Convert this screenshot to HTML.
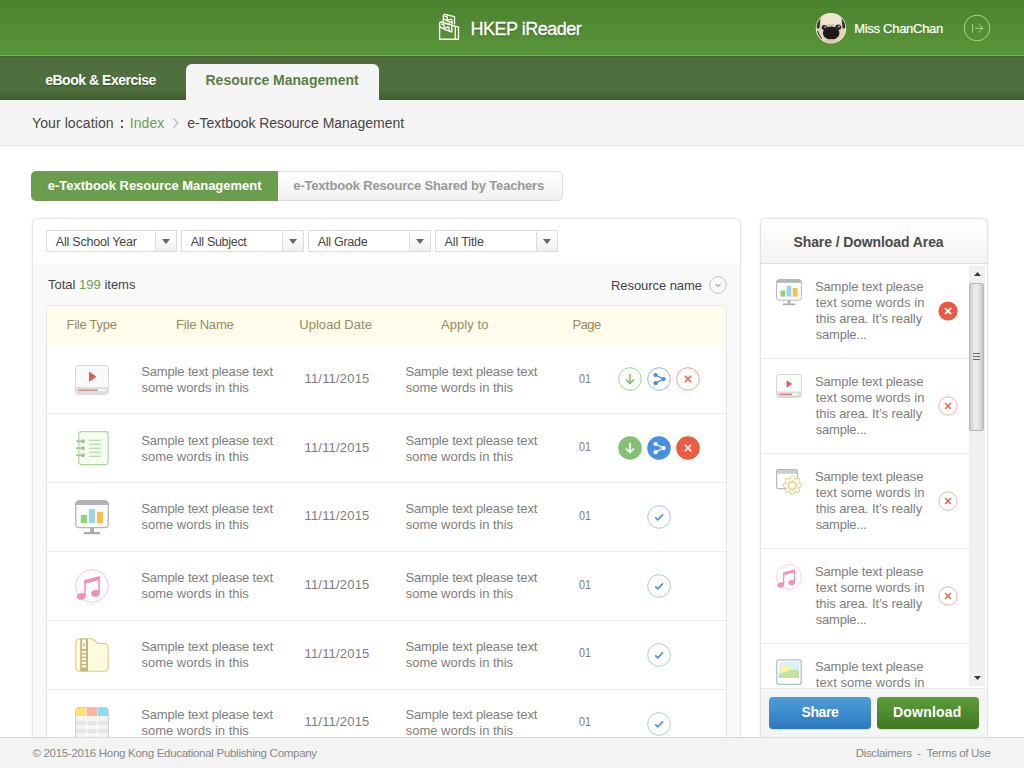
<!DOCTYPE html>
<html><head><meta charset="utf-8"><style>
*{margin:0;padding:0;box-sizing:border-box}
html,body{width:1024px;height:768px;overflow:hidden;background:#fff;font-family:"Liberation Sans",sans-serif;color:#444}
.a{position:absolute}
.t{position:absolute;white-space:nowrap;line-height:1}
svg{position:absolute;overflow:visible}
</style></head><body>
<div class="a" style="left:0;top:0;width:1024px;height:55px;background:linear-gradient(#4b822e,#5a9538)"></div>
<div class="a" style="left:0;top:55px;width:1024px;height:1px;background:#7aae5f"></div>
<div class="a" style="left:0;top:56px;width:1024px;height:44px;background:linear-gradient(#3e6230 0px,#4f6f3e 2px,#4f6f3e 34px,#3d5d2e 44px)"></div>
<div class="a" style="left:186px;top:64px;width:193px;height:36px;background:#f5f5f5;border-radius:6px 6px 0 0"></div>
<div class="a" style="left:0;top:100px;width:1024px;height:46px;background:#f5f5f5;border-bottom:1px solid #e2e2e2"></div>
<svg style="left:436px;top:11px" width="26" height="32" viewBox="0 0 26 32" fill="none" stroke="#fff" stroke-width="1.35" stroke-linejoin="round">
<path d="M3.6 12.2 Q3.6 10.8 5.2 11 L22.5 16.2 V28.2 H3.6 Z"/>
<path d="M3.8 15.6 Q9 19.2 15.8 21"/>
<path d="M5.2 13 L8 13.6 L8.4 17 L12.6 16 L13.4 19.3"/>
<path d="M10 12.3 L14 13.3"/>
<path d="M15.8 13.8 V21.2 M19.3 15.2 V28.2"/>
<path d="M7.3 11 V4.8 Q7.3 3.3 9 3.5 L18.5 5.7 V13.2"/>
<path d="M7.5 7.8 Q12.5 10.5 16.8 12.4"/>
<path d="M8.6 5.3 L11.2 6 L11.6 9.2 L15.5 8.2 L16.3 11.3"/>
</svg>
<div class="t" id="t1cf31660" style="left:470.52px;top:19.96px;font-size:18px;color:#fff;letter-spacing:-0.496px;text-shadow:0 1px 2px rgba(0,0,0,.4);-webkit-text-stroke:0.35px #fff;">HKEP iReader</div>

<svg style="left:815px;top:12px" width="32" height="32" viewBox="0 0 32 32">
<defs><clipPath id="av"><circle cx="16" cy="16.2" r="14.5"/></clipPath></defs>
<circle cx="16" cy="16.2" r="15.2" fill="#f2f5ee"/>
<g clip-path="url(#av)">
<rect x="0" y="0" width="32" height="32" fill="#e2d4b8"/>
<ellipse cx="16" cy="7.5" rx="11" ry="6.5" fill="#efe6d2"/>
<path d="M1 6 C2.5 4 4.5 4 5.5 5.5 L4.5 16 C3 17 2 16.5 1 15Z" fill="#3e332c"/>
<path d="M31 6 C29.5 4 27.5 4 26.5 5.5 L27.5 16 C29 17 30 16.5 31 15Z" fill="#3e332c"/>
<path d="M2.6 19 C3.5 22.5 4.8 25 6.5 27" stroke="#4a3c33" stroke-width="1.2" fill="none"/>
<ellipse cx="16.2" cy="21.2" rx="8.2" ry="6.6" fill="#1d1919"/>
<ellipse cx="9.6" cy="15.6" rx="2.9" ry="2.7" fill="#27232b"/><ellipse cx="23.2" cy="15.2" rx="2.9" ry="2.7" fill="#27232b"/>
<circle cx="10.3" cy="14.9" r="0.9" fill="#aeb2c4"/><circle cx="23.9" cy="14.5" r="0.9" fill="#aeb2c4"/>
<path d="M13 12.5 C14.5 13.5 17.5 13.5 19 12.5" stroke="#b09c7c" stroke-width="1" fill="none"/>
<ellipse cx="16" cy="29.5" rx="7.5" ry="2.2" fill="#dac9ad"/>
</g>
</svg>
<div class="t" id="ta21ea90d" style="left:854.22px;top:22.24px;font-size:13px;color:#fff;letter-spacing:-0.287px;-webkit-text-stroke:0.2px #fff;">Miss ChanChan</div>

<svg style="left:963px;top:14px" width="28" height="28" viewBox="0 0 28 28" fill="none" stroke="#a6d68e" stroke-width="1">
<circle cx="14" cy="14" r="12.8"/>
<path d="M9.6 10 V18.6 M12 14.3 H19.8 M15.8 10.2 L19.9 14.3 L15.8 18.4"/>
</svg>
<div class="t" id="t81c8b249" style="left:45.16px;top:73.15px;font-size:14px;color:#fff;font-weight:bold;letter-spacing:-0.470px;text-shadow:0 1px 1px rgba(0,0,0,.3);">eBook &amp; Exercise</div>

<div class="t" id="tf75ed92f" style="left:205.50px;top:73.45px;font-size:14px;color:#5b7f45;font-weight:bold;letter-spacing:-0.008px;">Resource Management</div>

<div class="t" id="t1b3dce1d" style="left:32.00px;top:115.95px;font-size:14px;color:#454545;letter-spacing:0.093px;">Your location</div>

<div class="a" style="left:121px;top:120px;width:2px;height:2px;background:#555"></div><div class="a" style="left:121px;top:126px;width:2px;height:2px;background:#555"></div>
<div class="t" id="teaa0acd9" style="left:129.70px;top:115.95px;font-size:14px;color:#6a9f4e;letter-spacing:0.090px;">Index</div>

<svg style="left:172px;top:117px" width="8" height="12" viewBox="0 0 8 12" fill="none" stroke="#b5b5b5" stroke-width="1.1"><path d="M1.5 1.5 L6 6 L1.5 10.5"/></svg>
<div class="t" id="t9b6aee1f" style="left:187.26px;top:115.95px;font-size:14px;color:#454545;letter-spacing:-0.038px;">e-Textbook Resource Management</div>

<div class="a" style="left:31px;top:171px;width:248px;height:30px;background:#6a9e4d;border-radius:5px 0 0 5px"></div>
<div class="a" style="left:278px;top:171px;width:285px;height:30px;background:linear-gradient(#fff,#f1f1f1);border:1px solid #dcdcdc;border-left:none;border-radius:0 5px 5px 0"></div>
<div class="t" id="t158e61e4" style="left:47.78px;top:178.99px;font-size:13px;color:#fff;font-weight:bold;letter-spacing:-0.021px;">e-Textbook Resource Management</div>

<div class="t" id="teff9cd35" style="left:293.24px;top:178.99px;font-size:13px;color:#999;font-weight:bold;letter-spacing:-0.175px;">e-Textbook Resource Shared by Teachers</div>

<div class="a" style="left:32px;top:218px;width:709px;height:560px;background:#f9f9f9;border:1px solid #e6e6e6;border-radius:6px;box-shadow:0 0 3px rgba(0,0,0,.06)"></div>
<div class="a" style="left:33px;top:219px;width:707px;height:44px;background:#fff;border-radius:5px 5px 0 0"></div>
<div class="a" style="left:46px;top:230px;width:131px;height:22px;background:#fff;border:1px solid #dcdcdc"></div>
<div class="a" style="left:155px;top:231px;width:21px;height:20px;background:linear-gradient(#fff,#f0f0f0);border-left:1px solid #dcdcdc"></div>
<svg style="left:162px;top:239px" width="8" height="5" viewBox="0 0 8 5"><path d="M0 0 H8 L4 5Z" fill="#666"/></svg>
<div class="t" id="tba548239" style="left:55.78px;top:235.52px;font-size:12.5px;color:#454545;letter-spacing:-0.207px;">All School Year</div>

<div class="a" style="left:181px;top:230px;width:123px;height:22px;background:#fff;border:1px solid #dcdcdc"></div>
<div class="a" style="left:282px;top:231px;width:21px;height:20px;background:linear-gradient(#fff,#f0f0f0);border-left:1px solid #dcdcdc"></div>
<svg style="left:289px;top:239px" width="8" height="5" viewBox="0 0 8 5"><path d="M0 0 H8 L4 5Z" fill="#666"/></svg>
<div class="t" id="t078d9cbb" style="left:190.78px;top:235.52px;font-size:12.5px;color:#454545;letter-spacing:-0.300px;">All Subject</div>

<div class="a" style="left:308px;top:230px;width:123px;height:22px;background:#fff;border:1px solid #dcdcdc"></div>
<div class="a" style="left:409px;top:231px;width:21px;height:20px;background:linear-gradient(#fff,#f0f0f0);border-left:1px solid #dcdcdc"></div>
<svg style="left:416px;top:239px" width="8" height="5" viewBox="0 0 8 5"><path d="M0 0 H8 L4 5Z" fill="#666"/></svg>
<div class="t" id="tf6671380" style="left:317.78px;top:235.52px;font-size:12.5px;color:#454545;letter-spacing:-0.275px;">All Grade</div>

<div class="a" style="left:435px;top:230px;width:123px;height:22px;background:#fff;border:1px solid #dcdcdc"></div>
<div class="a" style="left:536px;top:231px;width:21px;height:20px;background:linear-gradient(#fff,#f0f0f0);border-left:1px solid #dcdcdc"></div>
<svg style="left:543px;top:239px" width="8" height="5" viewBox="0 0 8 5"><path d="M0 0 H8 L4 5Z" fill="#666"/></svg>
<div class="t" id="t6e91f864" style="left:444.62px;top:235.52px;font-size:12.5px;color:#454545;letter-spacing:-0.125px;">All Title</div>

<div class="t" style="left:48px;top:278.4px;font-size:13px;color:#454545">Total <span style="color:#6a9f4e">199</span> items</div>
<div class="t" id="te484df56" style="left:611.00px;top:279.29px;font-size:13px;color:#454545;letter-spacing:-0.067px;">Resource name</div>

<svg style="left:709px;top:276px" width="18" height="18" viewBox="0 0 18 18" fill="none"><circle cx="9" cy="9" r="8.3" stroke="#c4c4c4" stroke-width="1"/><path d="M6.5 8 L9 10.5 L11.5 8" stroke="#777" stroke-width="1"/></svg>
<div class="a" style="left:46px;top:305px;width:681px;height:470px;background:#fff;border:1px solid #e6e6e6;border-radius:4px 4px 0 0"></div>
<div class="a" style="left:47px;top:306px;width:679px;height:39px;background:#fffcec;border-radius:3px 3px 0 0"></div>
<div class="t" id="t10d6f0d8" style="left:66.48px;top:318.19px;font-size:13px;color:#9c8a5e;letter-spacing:-0.235px;">File Type</div>

<div class="t" id="t41a4421b" style="left:175.96px;top:318.19px;font-size:13px;color:#9c8a5e;letter-spacing:-0.175px;">File Name</div>

<div class="t" id="ted98e10c" style="left:299.24px;top:318.19px;font-size:13px;color:#9c8a5e;letter-spacing:0.040px;">Upload Date</div>

<div class="t" id="tb70f513e" style="left:441.00px;top:318.19px;font-size:13px;color:#9c8a5e;letter-spacing:0.061px;">Apply to</div>

<div class="t" id="t1a3e5560" style="left:572.48px;top:318.19px;font-size:13px;color:#9c8a5e;letter-spacing:-0.500px;">Page</div>

<div class="t" id="t057e3c68" style="left:141.24px;top:364.99px;font-size:13px;color:#7e7e7e;letter-spacing:-0.149px;">Sample text please text</div>

<div class="t" id="t5a771e35" style="left:141.56px;top:380.99px;font-size:13px;color:#7e7e7e;letter-spacing:-0.022px;">some words in this</div>

<div class="t" id="td2aac179" style="left:405.50px;top:364.99px;font-size:13px;color:#7e7e7e;letter-spacing:-0.149px;">Sample text please text</div>

<div class="t" id="t203e7410" style="left:405.82px;top:380.99px;font-size:13px;color:#7e7e7e;letter-spacing:-0.022px;">some words in this</div>

<div class="t" id="t9f49a21f" style="left:304.50px;top:371.99px;font-size:13px;color:#7e7e7e;letter-spacing:0.183px;">11/11/2015</div>

<div class="t" id="tab7fd661" style="left:578.60px;top:371.57px;font-size:13.5px;color:#7e7e7e;transform:scaleX(0.8);transform-origin:0 0;">01</div>

<div class="a" style="left:47px;top:413px;width:679px;height:1px;background:#ebebeb"></div>
<div class="t" id="t2fc7eec0" style="left:141.24px;top:433.69px;font-size:13px;color:#7e7e7e;letter-spacing:-0.149px;">Sample text please text</div>

<div class="t" id="t2588b10c" style="left:141.56px;top:449.69px;font-size:13px;color:#7e7e7e;letter-spacing:-0.022px;">some words in this</div>

<div class="t" id="t03ab3f35" style="left:405.50px;top:433.69px;font-size:13px;color:#7e7e7e;letter-spacing:-0.149px;">Sample text please text</div>

<div class="t" id="t234efe47" style="left:405.82px;top:449.69px;font-size:13px;color:#7e7e7e;letter-spacing:-0.022px;">some words in this</div>

<div class="t" id="t53ed1394" style="left:304.50px;top:440.69px;font-size:13px;color:#7e7e7e;letter-spacing:0.183px;">11/11/2015</div>

<div class="t" id="t76348543" style="left:578.60px;top:440.27px;font-size:13.5px;color:#7e7e7e;transform:scaleX(0.8);transform-origin:0 0;">01</div>

<div class="a" style="left:47px;top:482px;width:679px;height:1px;background:#ebebeb"></div>
<div class="t" id="t7cd0013b" style="left:141.24px;top:502.39px;font-size:13px;color:#7e7e7e;letter-spacing:-0.149px;">Sample text please text</div>

<div class="t" id="teb7a37aa" style="left:141.56px;top:518.39px;font-size:13px;color:#7e7e7e;letter-spacing:-0.022px;">some words in this</div>

<div class="t" id="t75bdd00e" style="left:405.50px;top:502.39px;font-size:13px;color:#7e7e7e;letter-spacing:-0.149px;">Sample text please text</div>

<div class="t" id="t40d89c9a" style="left:405.82px;top:518.39px;font-size:13px;color:#7e7e7e;letter-spacing:-0.022px;">some words in this</div>

<div class="t" id="t5da3e625" style="left:304.50px;top:509.39px;font-size:13px;color:#7e7e7e;letter-spacing:0.183px;">11/11/2015</div>

<div class="t" id="t62ab574e" style="left:578.60px;top:508.97px;font-size:13.5px;color:#7e7e7e;transform:scaleX(0.8);transform-origin:0 0;">01</div>

<div class="a" style="left:47px;top:551px;width:679px;height:1px;background:#ebebeb"></div>
<div class="t" id="t32b355df" style="left:141.24px;top:571.09px;font-size:13px;color:#7e7e7e;letter-spacing:-0.149px;">Sample text please text</div>

<div class="t" id="t0e423a7c" style="left:141.56px;top:587.09px;font-size:13px;color:#7e7e7e;letter-spacing:-0.022px;">some words in this</div>

<div class="t" id="tf8c57e98" style="left:405.50px;top:571.09px;font-size:13px;color:#7e7e7e;letter-spacing:-0.149px;">Sample text please text</div>

<div class="t" id="t2513265a" style="left:405.82px;top:587.09px;font-size:13px;color:#7e7e7e;letter-spacing:-0.022px;">some words in this</div>

<div class="t" id="t14d731b0" style="left:304.50px;top:578.09px;font-size:13px;color:#7e7e7e;letter-spacing:0.183px;">11/11/2015</div>

<div class="t" id="tfe01c3d2" style="left:578.60px;top:577.67px;font-size:13.5px;color:#7e7e7e;transform:scaleX(0.8);transform-origin:0 0;">01</div>

<div class="a" style="left:47px;top:620px;width:679px;height:1px;background:#ebebeb"></div>
<div class="t" id="t3534ef5d" style="left:141.24px;top:639.79px;font-size:13px;color:#7e7e7e;letter-spacing:-0.149px;">Sample text please text</div>

<div class="t" id="t87bada45" style="left:141.56px;top:655.79px;font-size:13px;color:#7e7e7e;letter-spacing:-0.022px;">some words in this</div>

<div class="t" id="tef16728b" style="left:405.50px;top:639.79px;font-size:13px;color:#7e7e7e;letter-spacing:-0.149px;">Sample text please text</div>

<div class="t" id="t87359697" style="left:405.82px;top:655.79px;font-size:13px;color:#7e7e7e;letter-spacing:-0.022px;">some words in this</div>

<div class="t" id="t99481b8e" style="left:304.50px;top:646.79px;font-size:13px;color:#7e7e7e;letter-spacing:0.183px;">11/11/2015</div>

<div class="t" id="tf3126b54" style="left:578.60px;top:646.37px;font-size:13.5px;color:#7e7e7e;transform:scaleX(0.8);transform-origin:0 0;">01</div>

<div class="a" style="left:47px;top:689px;width:679px;height:1px;background:#ebebeb"></div>
<div class="t" id="t8cc3bdeb" style="left:141.24px;top:708.49px;font-size:13px;color:#7e7e7e;letter-spacing:-0.149px;">Sample text please text</div>

<div class="t" id="t0cf6a21e" style="left:141.56px;top:724.49px;font-size:13px;color:#7e7e7e;letter-spacing:-0.022px;">some words in this</div>

<div class="t" id="t7eb41ebd" style="left:405.50px;top:708.49px;font-size:13px;color:#7e7e7e;letter-spacing:-0.149px;">Sample text please text</div>

<div class="t" id="t29486bf5" style="left:405.82px;top:724.49px;font-size:13px;color:#7e7e7e;letter-spacing:-0.022px;">some words in this</div>

<div class="t" id="t9af4af5b" style="left:304.50px;top:715.49px;font-size:13px;color:#7e7e7e;letter-spacing:0.183px;">11/11/2015</div>

<div class="t" id="ta723ff32" style="left:578.60px;top:715.07px;font-size:13.5px;color:#7e7e7e;transform:scaleX(0.8);transform-origin:0 0;">01</div>

<svg style="left:618px;top:366.5px" width="24" height="24" viewBox="0 0 24 24"><circle cx="12" cy="12" r="11.3" fill="#fff" stroke="#9fd393" stroke-width="1"/><path d="M12 6.8 V16.5 M8 12.5 L12 16.5 L16 12.5" fill="none" stroke="#86c078" stroke-width="1.6"/></svg>
<svg style="left:647px;top:366.5px" width="24" height="24" viewBox="0 0 24 24"><circle cx="12" cy="12" r="11.3" fill="#fff" stroke="#8fb8ee" stroke-width="1"/><path d="M8.6 8 L16.6 12.1 L8.6 16.2" fill="none" stroke="#4a90e2" stroke-width="1.3"/><circle cx="8.6" cy="8" r="2.1" fill="#4a90e2"/><circle cx="8.6" cy="16.2" r="2.1" fill="#4a90e2"/><circle cx="16.6" cy="12.1" r="2.1" fill="#4a90e2"/></svg>
<svg style="left:676px;top:366.5px" width="24" height="24" viewBox="0 0 24 24"><circle cx="12" cy="12" r="11.3" fill="#fff" stroke="#f2a394" stroke-width="1"/><path d="M8.8 8.8 L15.2 15.2 M15.2 8.8 L8.8 15.2" fill="none" stroke="#ea5d44" stroke-width="1.5"/></svg>
<svg style="left:618px;top:435.5px" width="24" height="24" viewBox="0 0 24 24"><circle cx="12" cy="12" r="11.8" fill="#86c078"/><path d="M12 6.8 V16.5 M8 12.5 L12 16.5 L16 12.5" fill="none" stroke="#fff" stroke-width="1.6"/></svg>
<svg style="left:647px;top:435.5px" width="24" height="24" viewBox="0 0 24 24"><circle cx="12" cy="12" r="11.8" fill="#4a90e2"/><path d="M8.6 8 L16.6 12.1 L8.6 16.2" fill="none" stroke="#fff" stroke-width="1.3"/><circle cx="8.6" cy="8" r="2.1" fill="#fff"/><circle cx="8.6" cy="16.2" r="2.1" fill="#fff"/><circle cx="16.6" cy="12.1" r="2.1" fill="#fff"/></svg>
<svg style="left:676px;top:435.5px" width="24" height="24" viewBox="0 0 24 24"><circle cx="12" cy="12" r="11.8" fill="#ea5d44"/><path d="M8.8 8.8 L15.2 15.2 M15.2 8.8 L8.8 15.2" fill="none" stroke="#fff" stroke-width="1.5"/></svg>
<svg style="left:647px;top:505px" width="24" height="24" viewBox="0 0 24 24"><circle cx="12" cy="12" r="11.3" fill="#fff" stroke="#a9c8f0" stroke-width="1"/><path d="M8.2 12.3 L10.8 14.8 L16 9.4" fill="none" stroke="#4a90e2" stroke-width="1.6"/></svg>
<svg style="left:647px;top:574px" width="24" height="24" viewBox="0 0 24 24"><circle cx="12" cy="12" r="11.3" fill="#fff" stroke="#a9c8f0" stroke-width="1"/><path d="M8.2 12.3 L10.8 14.8 L16 9.4" fill="none" stroke="#4a90e2" stroke-width="1.6"/></svg>
<svg style="left:647px;top:643px" width="24" height="24" viewBox="0 0 24 24"><circle cx="12" cy="12" r="11.3" fill="#fff" stroke="#a9c8f0" stroke-width="1"/><path d="M8.2 12.3 L10.8 14.8 L16 9.4" fill="none" stroke="#4a90e2" stroke-width="1.6"/></svg>
<svg style="left:647px;top:712px" width="24" height="24" viewBox="0 0 24 24"><circle cx="12" cy="12" r="11.3" fill="#fff" stroke="#a9c8f0" stroke-width="1"/><path d="M8.2 12.3 L10.8 14.8 L16 9.4" fill="none" stroke="#4a90e2" stroke-width="1.6"/></svg>
<svg style="left:75px;top:365px" width="34" height="30" viewBox="0 0 34 30">
<rect x="0.5" y="0.5" width="33" height="29" rx="3.5" fill="#fafafa" stroke="#d8d8d8"/>
<path d="M0.5 22 H33.5 V26 A3.5 3.5 0 0 1 30 29.5 H4 A3.5 3.5 0 0 1 0.5 26Z" fill="#dedede"/>
<rect x="3" y="24.5" width="20" height="1.3" fill="#e47d7d"/><rect x="23" y="24.5" width="8" height="1.3" fill="#fff"/>
<path d="M14 6.5 L21.5 11.7 L14 16.9Z" fill="#e05a62"/>
</svg>
<svg style="left:76px;top:431px" width="34" height="36" viewBox="0 0 34 36">
<rect x="2.8" y="0.6" width="29.4" height="33" rx="2.5" fill="#f7fcf2" stroke="#a9d59b" stroke-width="1.1"/>
<g fill="#9ccc8c"><rect x="0" y="9.3" width="8" height="1.8"/><rect x="0" y="16.3" width="8" height="1.8"/><rect x="0" y="23.3" width="8" height="1.8"/>
<circle cx="7" cy="10.2" r="2"/><circle cx="7" cy="17.2" r="2"/><circle cx="7" cy="24.2" r="2"/></g>
<g stroke="#a6d198" stroke-width="1.1"><path d="M12.9 9.3 H25 M12.9 13.3 H25 M12.9 17.3 H25 M12.9 21.3 H25 M12.9 25.3 H25"/></g>
</svg>
<svg style="left:75px;top:500px" width="34.0" height="35.0" viewBox="0 0 34 35">
<rect x="0.7" y="0.7" width="32.6" height="27" rx="3.5" fill="#fbfbfb" stroke="#b6b6b6" stroke-width="1.3"/>
<path d="M0.7 4.2 A3.5 3.5 0 0 1 4.2 0.7 H29.8 A3.5 3.5 0 0 1 33.3 4.2 V5 H0.7Z" fill="#b3b3b3"/>
<rect x="5.8" y="15" width="6.2" height="8" fill="#8fd57b"/><rect x="13.9" y="9" width="6.1" height="14" fill="#9bd5ec"/><rect x="21.9" y="11.8" width="6.1" height="11.2" fill="#fcbd4d"/>
<rect x="15.2" y="28" width="3.8" height="4" fill="#aaa"/><rect x="9" y="32" width="16" height="2.2" fill="#aaa"/>
</svg>
<svg style="left:75px;top:569px" width="34.0" height="34.0" viewBox="0 0 34 34">
<circle cx="17" cy="17" r="16.3" fill="#fff" stroke="#f7c3d6" stroke-width="1"/>
<path d="M9.2 11 L24.9 7 V24 H23.3 V11.2 L10.8 14.4 V27 H9.2Z" fill="#f48fb8"/>
<ellipse cx="6.2" cy="27.4" rx="4.4" ry="3.3" transform="rotate(-12 6.2 27.4)" fill="#f48fb8"/>
<ellipse cx="20.5" cy="24.3" rx="4.4" ry="3.3" transform="rotate(-12 20.5 24.3)" fill="#f48fb8"/>
</svg>
<svg style="left:75px;top:638px" width="34" height="34" viewBox="0 0 34 34">
<path d="M0.8 4.5 A3.7 3.7 0 0 1 4.5 0.8 H17.5 L23 5.5 H29.5 A3.7 3.7 0 0 1 33.2 9.2 V29.5 A3.7 3.7 0 0 1 29.5 33.2 H4.5 A3.7 3.7 0 0 1 0.8 29.5Z" fill="#fffadb" stroke="#d8c98f" stroke-width="1.1"/>
<rect x="5.2" y="0.8" width="7.8" height="32.4" fill="#c9b47c"/>
<g fill="#fff"><rect x="7.2" y="1.5" width="3.6" height="9.5"/><rect x="6.9" y="13" width="4.2" height="2"/><rect x="6.9" y="16.6" width="4.2" height="2"/><rect x="6.9" y="20.2" width="4.2" height="2"/><rect x="6.9" y="23.8" width="4.2" height="2"/><rect x="6.9" y="27.4" width="4.2" height="2"/></g>
<rect x="8.3" y="5" width="1.4" height="3.5" fill="#c9b47c"/>
</svg>
<svg style="left:75px;top:707px" width="34" height="34" viewBox="0 0 34 34">
<rect x="0.6" y="0.6" width="32.8" height="32" rx="3" fill="#f4f4f4" stroke="#cfcfcf" stroke-width="1.1"/>
<rect x="1" y="1" width="10.2" height="8" fill="#fde36a"/><rect x="11.9" y="1" width="10.2" height="8" fill="#fbb29f"/><rect x="22.8" y="1" width="10.2" height="8" fill="#8fdcf8"/>
<rect x="1" y="14" width="32" height="4" fill="#e4e4e4"/><rect x="1" y="22" width="32" height="4" fill="#e4e4e4"/>
<rect x="11.2" y="9" width="0.8" height="24" fill="#fff"/><rect x="22.1" y="9" width="0.8" height="24" fill="#fff"/>
</svg>
<div class="a" style="left:760px;top:218px;width:228px;height:560px;background:#fff;border:1px solid #e2e2e2;border-radius:5px;box-shadow:0 0 3px rgba(0,0,0,.07)"></div>
<div class="a" style="left:761px;top:219px;width:226px;height:45px;background:linear-gradient(#fff,#f3f3f3);border-bottom:1px solid #dedede;border-radius:5px 5px 0 0"></div>
<div class="t" id="t393962fb" style="left:793.48px;top:235.15px;font-size:14px;color:#4a4a4a;font-weight:bold;letter-spacing:-0.090px;">Share / Download Area</div>

<div class="t" id="tf4cc3ab2" style="left:814.96px;top:279.99px;font-size:13px;color:#7e7e7e;letter-spacing:-0.126px;">Sample text please</div>

<div class="t" id="t796ae2ef" style="left:815.76px;top:295.89px;font-size:13px;color:#7e7e7e;letter-spacing:0.015px;">text some words in</div>

<div class="t" id="t93f6f3d8" style="left:815.76px;top:311.79px;font-size:13px;color:#7e7e7e;letter-spacing:-0.083px;">this area. It’s really</div>

<div class="t" id="t91bc972f" style="left:815.76px;top:327.69px;font-size:13px;color:#7e7e7e;letter-spacing:-0.225px;">sample...</div>

<div class="a" style="left:761px;top:358px;width:208px;height:1px;background:#ebebeb"></div>
<div class="t" id="ta391cb50" style="left:814.96px;top:374.99px;font-size:13px;color:#7e7e7e;letter-spacing:-0.126px;">Sample text please</div>

<div class="t" id="tde1f47c0" style="left:815.76px;top:390.89px;font-size:13px;color:#7e7e7e;letter-spacing:0.015px;">text some words in</div>

<div class="t" id="t1ef0b74b" style="left:815.76px;top:406.79px;font-size:13px;color:#7e7e7e;letter-spacing:-0.083px;">this area. It’s really</div>

<div class="t" id="t98b9b774" style="left:815.76px;top:422.69px;font-size:13px;color:#7e7e7e;letter-spacing:-0.225px;">sample...</div>

<div class="a" style="left:761px;top:453px;width:208px;height:1px;background:#ebebeb"></div>
<div class="t" id="t83a39213" style="left:814.96px;top:469.99px;font-size:13px;color:#7e7e7e;letter-spacing:-0.126px;">Sample text please</div>

<div class="t" id="tb8244142" style="left:815.76px;top:485.89px;font-size:13px;color:#7e7e7e;letter-spacing:0.015px;">text some words in</div>

<div class="t" id="t422cadad" style="left:815.76px;top:501.79px;font-size:13px;color:#7e7e7e;letter-spacing:-0.083px;">this area. It’s really</div>

<div class="t" id="t2d8edc61" style="left:815.76px;top:517.69px;font-size:13px;color:#7e7e7e;letter-spacing:-0.225px;">sample...</div>

<div class="a" style="left:761px;top:548px;width:208px;height:1px;background:#ebebeb"></div>
<div class="t" id="ta00c875b" style="left:814.96px;top:564.99px;font-size:13px;color:#7e7e7e;letter-spacing:-0.126px;">Sample text please</div>

<div class="t" id="tb61bcc38" style="left:815.76px;top:580.89px;font-size:13px;color:#7e7e7e;letter-spacing:0.015px;">text some words in</div>

<div class="t" id="tc70893ef" style="left:815.76px;top:596.79px;font-size:13px;color:#7e7e7e;letter-spacing:-0.083px;">this area. It’s really</div>

<div class="t" id="t9f67ed18" style="left:815.76px;top:612.69px;font-size:13px;color:#7e7e7e;letter-spacing:-0.225px;">sample...</div>

<div class="a" style="left:761px;top:643px;width:208px;height:1px;background:#ebebeb"></div>
<div class="t" id="t48cf8db0" style="left:814.96px;top:659.99px;font-size:13px;color:#7e7e7e;letter-spacing:-0.126px;">Sample text please</div>

<div class="t" id="ta8d7feb5" style="left:815.76px;top:675.89px;font-size:13px;color:#7e7e7e;letter-spacing:0.015px;">text some words in</div>

<div class="a" style="left:761px;top:264px;width:208px;height:0"></div>
<svg style="left:776px;top:279px" width="26.0" height="26.76470588235294" viewBox="0 0 34 35">
<rect x="0.7" y="0.7" width="32.6" height="27" rx="3.5" fill="#fbfbfb" stroke="#b6b6b6" stroke-width="1.3"/>
<path d="M0.7 4.2 A3.5 3.5 0 0 1 4.2 0.7 H29.8 A3.5 3.5 0 0 1 33.3 4.2 V5 H0.7Z" fill="#b3b3b3"/>
<rect x="5.8" y="15" width="6.2" height="8" fill="#8fd57b"/><rect x="13.9" y="9" width="6.1" height="14" fill="#9bd5ec"/><rect x="21.9" y="11.8" width="6.1" height="11.2" fill="#fcbd4d"/>
<rect x="15.2" y="28" width="3.8" height="4" fill="#aaa"/><rect x="9" y="32" width="16" height="2.2" fill="#aaa"/>
</svg>
<svg style="left:776px;top:374px" width="26" height="24" viewBox="0 0 26 24">
<rect x="0.5" y="0.5" width="25" height="23" rx="3" fill="#fcfcfc" stroke="#d4d4d4"/>
<path d="M0.5 17.5 H25.5 V20.5 A3 3 0 0 1 22.5 23.5 H3.5 A3 3 0 0 1 0.5 20.5Z" fill="#dddddd"/>
<rect x="3.6" y="19.7" width="12.5" height="1.3" fill="#e47d7d"/><rect x="16" y="19.7" width="6" height="1.3" fill="#fff"/>
<path d="M10.6 6.2 L16.2 10 L10.6 13.8Z" fill="#e05a62"/>
</svg>
<svg style="left:776px;top:469px" width="28" height="28" viewBox="0 0 28 28">
<rect x="0.6" y="0.6" width="20.8" height="19" rx="1.5" fill="#fff" stroke="#b8b8b8" stroke-width="1.2"/>
<rect x="1" y="1" width="20" height="3.8" fill="#cfcfcf"/>
<circle cx="23.60" cy="16.40" r="2.1" fill="#fffbea" stroke="#d8c17c" stroke-width="0.9"/><circle cx="21.49" cy="21.49" r="2.1" fill="#fffbea" stroke="#d8c17c" stroke-width="0.9"/><circle cx="16.40" cy="23.60" r="2.1" fill="#fffbea" stroke="#d8c17c" stroke-width="0.9"/><circle cx="11.31" cy="21.49" r="2.1" fill="#fffbea" stroke="#d8c17c" stroke-width="0.9"/><circle cx="9.20" cy="16.40" r="2.1" fill="#fffbea" stroke="#d8c17c" stroke-width="0.9"/><circle cx="11.31" cy="11.31" r="2.1" fill="#fffbea" stroke="#d8c17c" stroke-width="0.9"/><circle cx="16.40" cy="9.20" r="2.1" fill="#fffbea" stroke="#d8c17c" stroke-width="0.9"/><circle cx="21.49" cy="11.31" r="2.1" fill="#fffbea" stroke="#d8c17c" stroke-width="0.9"/><circle cx="16.4" cy="16.4" r="7" fill="#fffbea" stroke="#d8c17c" stroke-width="0.9"/><circle cx="23.60" cy="16.40" r="1.65" fill="#fffbea"/><circle cx="21.49" cy="21.49" r="1.65" fill="#fffbea"/><circle cx="16.40" cy="23.60" r="1.65" fill="#fffbea"/><circle cx="11.31" cy="21.49" r="1.65" fill="#fffbea"/><circle cx="9.20" cy="16.40" r="1.65" fill="#fffbea"/><circle cx="11.31" cy="11.31" r="1.65" fill="#fffbea"/><circle cx="16.40" cy="9.20" r="1.65" fill="#fffbea"/><circle cx="21.49" cy="11.31" r="1.65" fill="#fffbea"/><circle cx="16.4" cy="16.4" r="6.5" fill="#fffbea"/>
<circle cx="16.4" cy="16.4" r="3.9" fill="none" stroke="#f1dba0" stroke-width="2.6"/>
<circle cx="16.4" cy="16.4" r="1.9" fill="#fff"/>
</svg>
<svg style="left:776px;top:564px" width="26.0" height="26.0" viewBox="0 0 34 34">
<circle cx="17" cy="17" r="16.3" fill="#fff" stroke="#f7c3d6" stroke-width="1"/>
<path d="M9.2 11 L24.9 7 V24 H23.3 V11.2 L10.8 14.4 V27 H9.2Z" fill="#f48fb8"/>
<ellipse cx="6.2" cy="27.4" rx="4.4" ry="3.3" transform="rotate(-12 6.2 27.4)" fill="#f48fb8"/>
<ellipse cx="20.5" cy="24.3" rx="4.4" ry="3.3" transform="rotate(-12 20.5 24.3)" fill="#f48fb8"/>
</svg>
<svg style="left:776px;top:659px" width="26" height="26" viewBox="0 0 26 26">
<rect x="0.8" y="0.8" width="24.4" height="24.6" rx="2" fill="#fff" stroke="#a9c3cb" stroke-width="1.3"/>
<rect x="3" y="3" width="20" height="16" fill="#d9f1fa"/>
<circle cx="9.7" cy="10.5" r="4.7" fill="#fdf49a"/>
<path d="M3 14.5 C7 14 10 12 15 11 C19 10.5 21.5 11 23 12 V19 H3Z" fill="#c3e29f"/>
</svg>
<svg style="left:938px;top:300.5px" width="20" height="20" viewBox="0 0 20 20"><circle cx="10" cy="10" r="9.6" fill="#ea5a43"/><path d="M6.9 6.9 L13.1 13.1 M13.1 6.9 L6.9 13.1" stroke="#fff" stroke-width="1.8"/></svg>
<svg style="left:938px;top:395.5px" width="20" height="20" viewBox="0 0 20 20"><circle cx="10" cy="10" r="9.2" fill="#fff" stroke="#f4b1a4" stroke-width="1"/><path d="M7.1 7.1 L12.9 12.9 M12.9 7.1 L7.1 12.9" stroke="#e8604a" stroke-width="1.4"/></svg>
<svg style="left:938px;top:490.5px" width="20" height="20" viewBox="0 0 20 20"><circle cx="10" cy="10" r="9.2" fill="#fff" stroke="#f4b1a4" stroke-width="1"/><path d="M7.1 7.1 L12.9 12.9 M12.9 7.1 L7.1 12.9" stroke="#e8604a" stroke-width="1.4"/></svg>
<svg style="left:938px;top:585.5px" width="20" height="20" viewBox="0 0 20 20"><circle cx="10" cy="10" r="9.2" fill="#fff" stroke="#f4b1a4" stroke-width="1"/><path d="M7.1 7.1 L12.9 12.9 M12.9 7.1 L7.1 12.9" stroke="#e8604a" stroke-width="1.4"/></svg>
<div class="a" style="left:969px;top:266px;width:16px;height:420px;background:#f0f0f0"></div>
<svg style="left:973.5px;top:272px" width="7" height="4" viewBox="0 0 7 4"><path d="M0 4 L3.5 0 L7 4Z" fill="#3a3a3a"/></svg>
<svg style="left:973.5px;top:676px" width="7" height="4" viewBox="0 0 7 4"><path d="M0 0 L7 0 L3.5 4Z" fill="#3a3a3a"/></svg>
<div class="a" style="left:969px;top:283px;width:15px;height:148px;background:linear-gradient(90deg,#c9c9c9,#ececec 35%,#e6e6e6 65%,#c4c4c4);border:1px solid #b7b7b7;border-radius:2px"></div>
<div class="a" style="left:973px;top:353px;width:7px;height:1px;background:#6a6a6a;box-shadow:0 3px 0 #6a6a6a,0 6px 0 #6a6a6a"></div>
<div class="a" style="left:761px;top:688px;width:226px;height:60px;background:#f5f5f5;border-top:1px solid #e6e6e6"></div>
<div class="a" style="left:769px;top:697px;width:102px;height:32px;background:linear-gradient(#4f9fd9,#2d78bd);border-radius:4px;box-shadow:0 1px 0 rgba(0,0,0,.1)"></div>
<div class="a" style="left:877px;top:697px;width:102px;height:32px;background:linear-gradient(#5e9d3c,#3e7821);border-radius:4px;box-shadow:0 1px 0 rgba(0,0,0,.1)"></div>
<div class="t" id="tbe20639d" style="left:801.52px;top:705.45px;font-size:14px;color:#fff;font-weight:bold;letter-spacing:-0.430px;">Share</div>

<div class="t" id="tf224c022" style="left:892.98px;top:705.45px;font-size:14px;color:#fff;font-weight:bold;letter-spacing:0.211px;">Download</div>

<div class="a" style="left:0;top:737px;width:1024px;height:31px;background:#f3f3f3;border-top:1px solid #dadada"></div>
<div class="t" id="t494252e4" style="left:32.38px;top:747.86px;font-size:11.5px;color:#888;letter-spacing:-0.287px;">© 2015-2016 Hong Kong Educational Publishing Company</div>

<div class="t" id="te03f1f45" style="left:855.68px;top:747.86px;font-size:11.5px;color:#888;letter-spacing:-0.318px;">Disclaimers&nbsp;&nbsp;-&nbsp;&nbsp;Terms of Use</div>

</body></html>
